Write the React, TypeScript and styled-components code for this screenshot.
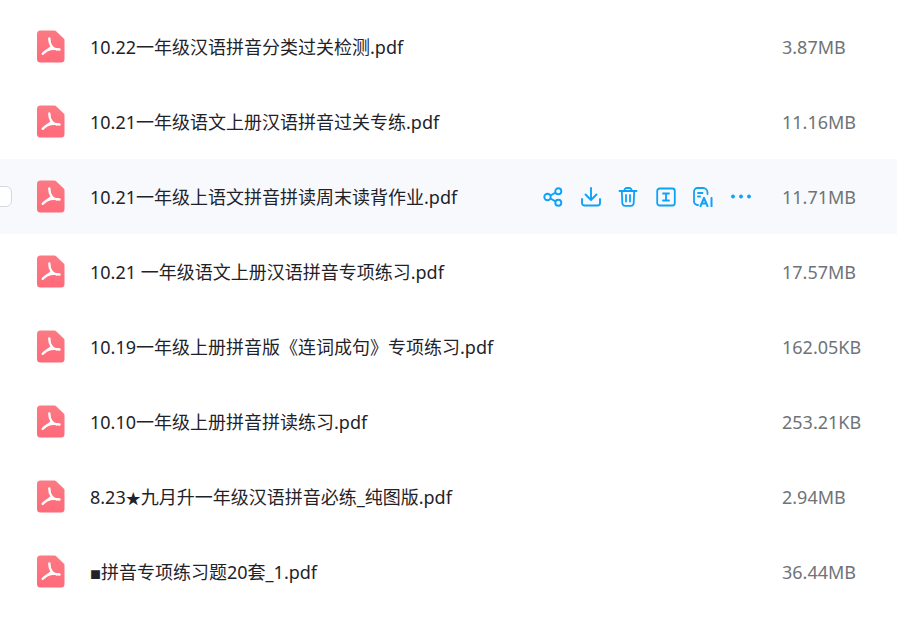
import React from "react";
import styled, { createGlobalStyle } from "styled-components";

const files = [
  { name: "10.22一年级汉语拼音分类过关检测.pdf", size: "3.87MB" },
  { name: "10.21一年级语文上册汉语拼音过关专练.pdf", size: "11.16MB" },
  { name: "10.21一年级上语文拼音拼读周末读背作业.pdf", size: "11.71MB", hovered: true },
  { name: "10.21 一年级语文上册汉语拼音专项练习.pdf", size: "17.57MB" },
  { name: "10.19一年级上册拼音版《连词成句》专项练习.pdf", size: "162.05KB" },
  { name: "10.10一年级上册拼音拼读练习.pdf", size: "253.21KB" },
  { name: "8.23", star: true, rest: "九月升一年级汉语拼音必练_纯图版.pdf", size: "2.94MB" },
  { square: true, rest: "拼音专项练习题20套_1.pdf", size: "36.44MB" },
];

const PdfIcon = () => (
  <svg width="28" height="33" viewBox="0 0 28 33">
    <defs>
      <linearGradient id="pdfFill" x1="0" y1="0" x2="0" y2="1">
        <stop offset="0" stopColor="#fb7a84" />
        <stop offset="1" stopColor="#ff6a7a" />
      </linearGradient>
    </defs>
    <path
      d="M3.500 0.500H17.500a2 2 0 0 1 1.400 0.600L27 8.700a2 2 0 0 1 0.500 1.400V29a3.500 3.500 0 0 1-3.500 3.500H3.500A3.500 3.500 0 0 1 0 29V4a3.500 3.500 0 0 1 3.500-3.500Z"
      fill="url(#pdfFill)"
    />
    <path
      d="M12.300 8.500c0 3.200 0.800 6 2.400 8M14.700 16.500c-2.600 2.600-6 4.800-9 7.300M10 20.300c4-1.600 8.500-1.700 12.500-0.800M14.700 16.500c1.500 1.700 3 2.500 5 3"
      fill="none"
      stroke="#fff"
      strokeWidth="2.400"
      strokeLinecap="round"
    />
  </svg>
);

const ShareIcon = () => (
  <svg width="20" height="20" viewBox="0 0 20 20" fill="none" stroke="currentColor" strokeWidth="1.900">
    <circle cx="4.500" cy="10" r="3.200" />
    <circle cx="15.300" cy="4.300" r="3" />
    <circle cx="15.300" cy="15.700" r="3" />
    <path d="M7.300 8.500l5.300-2.800M7.300 11.500l5.300 2.800" />
  </svg>
);

const DownloadIcon = () => (
  <svg width="20" height="20" viewBox="0 0 20 20" fill="none" stroke="currentColor" strokeWidth="1.900" strokeLinecap="round" strokeLinejoin="round">
    <path d="M10 1V13M4.500 7.500l5.500 5.500 5.500-5.500" />
    <path d="M1 12v4a2.500 2.500 0 0 0 2.500 2.500h13A2.500 2.500 0 0 0 19 16v-4" />
  </svg>
);

const TrashIcon = () => (
  <svg width="20" height="20" viewBox="0 0 20 20" fill="none" stroke="currentColor" strokeWidth="1.800" strokeLinecap="round" strokeLinejoin="round">
    <path d="M1.500 4h17" />
    <path d="M6.500 4V3.300A2.300 2.300 0 0 1 8.800 1h2.400a2.300 2.300 0 0 1 2.300 2.300V4" />
    <path d="M3.800 4l0.500 12a3 3 0 0 0 3 2.800h5.400a3 3 0 0 0 3-2.800l0.500-12" />
    <path d="M8 8v6.500M12 8v6.500" />
  </svg>
);

const RenameIcon = () => (
  <svg width="20" height="20" viewBox="0 0 20 20" fill="none" stroke="currentColor" strokeWidth="1.800" strokeLinecap="round">
    <rect x="1.200" y="1.500" width="17.600" height="17" rx="2.500" />
    <path d="M7 6.500h6M7 13.500h6M10 6.500v7" />
  </svg>
);

const AiDocIcon = () => (
  <svg width="20" height="20" viewBox="0 0 20 20" fill="none" stroke="currentColor" strokeWidth="1.800" strokeLinecap="round" strokeLinejoin="round">
    <path d="M5 18H4.500A3.500 3.500 0 0 1 1 14.500V4.500A3.500 3.500 0 0 1 4.500 1h5.500a4.500 4.500 0 0 1 4.500 4.500V7" />
    <path d="M5 6h4.500M5 9.500h2" />
    <path d="M7.500 19.200l3.500-8.400 3.500 8.400M8.800 16.500h4.400" strokeWidth="2" />
    <path d="M18.500 11v8.200" strokeWidth="2" />
  </svg>
);

const MoreIcon = () => (
  <svg width="20" height="20" viewBox="0 0 20 20" fill="currentColor">
    <circle cx="2" cy="9.500" r="1.900" />
    <circle cx="10" cy="9.500" r="1.900" />
    <circle cx="18" cy="9.500" r="1.900" />
  </svg>
);

const App = () => (
  <>
    <GlobalStyle />
    <List>
      {files.map((file) => (
        <Row key={file.size} $hovered={file.hovered}>
          <CheckSlot>{file.hovered && <Checkbox />}</CheckSlot>
          <PdfIcon />
          <FileName>
            {file.name}
            {file.star && <Star>★</Star>}
            {file.square && <Square>■</Square>}
            {file.rest}
          </FileName>
          {file.hovered && (
            <Actions>
              <ShareIcon />
              <DownloadIcon />
              <TrashIcon />
              <RenameIcon />
              <AiDocIcon />
              <MoreIcon />
            </Actions>
          )}
          <FileSize>{file.size}</FileSize>
        </Row>
      ))}
    </List>
  </>
);

export default App;

const GlobalStyle = createGlobalStyle`
  html, body {
    margin: 0;
    padding: 0;
    background: #fff;
    overflow: hidden;
  }
  body {
    font-family: "Noto Sans", "Noto Sans CJK SC", sans-serif;
  }
`;

const List = styled.div`
  display: flex;
  flex-direction: column;
  padding-top: 9px;
  width: 897px;
  height: 632px;
  box-sizing: border-box;
`;

const Row = styled.div<{ $hovered?: boolean }>`
  display: flex;
  align-items: center;
  height: 75px;
  flex-shrink: 0;
  background: ${(p) => (p.$hovered ? "#f7f9fd" : "transparent")};
`;

const CheckSlot = styled.div`
  width: 37px;
  display: flex;
  justify-content: flex-end;
  overflow: hidden;
  flex-shrink: 0;
`;

const Checkbox = styled.div`
  width: 21px;
  height: 21px;
  margin-right: 25px;
  border: 1px solid #d5d8de;
  border-radius: 6px;
  background: #fff;
  box-sizing: border-box;
  flex-shrink: 0;
`;

const FileName = styled.div`
  margin-left: 25px;
  flex: 1;
  font-size: 18px;
  line-height: 24px;
  color: #1f2329;
  white-space: nowrap;
`;

const Star = styled.span`
  display: inline-block;
  width: 15px;
  font-size: 15px;
  line-height: 1;
  text-align: center;
`;

const Square = styled.span`
  display: inline-block;
  width: 11px;
  font-size: 11px;
  line-height: 1;
  text-align: center;
`;

const Actions = styled.div`
  display: flex;
  align-items: center;
  gap: 17.600px;
  color: #0ea2f8;
  margin-right: 31px;
`;

const FileSize = styled.div`
  width: 115px;
  flex-shrink: 0;
  font-size: 18px;
  line-height: 24px;
  color: #6f7378;
  white-space: nowrap;
`;
